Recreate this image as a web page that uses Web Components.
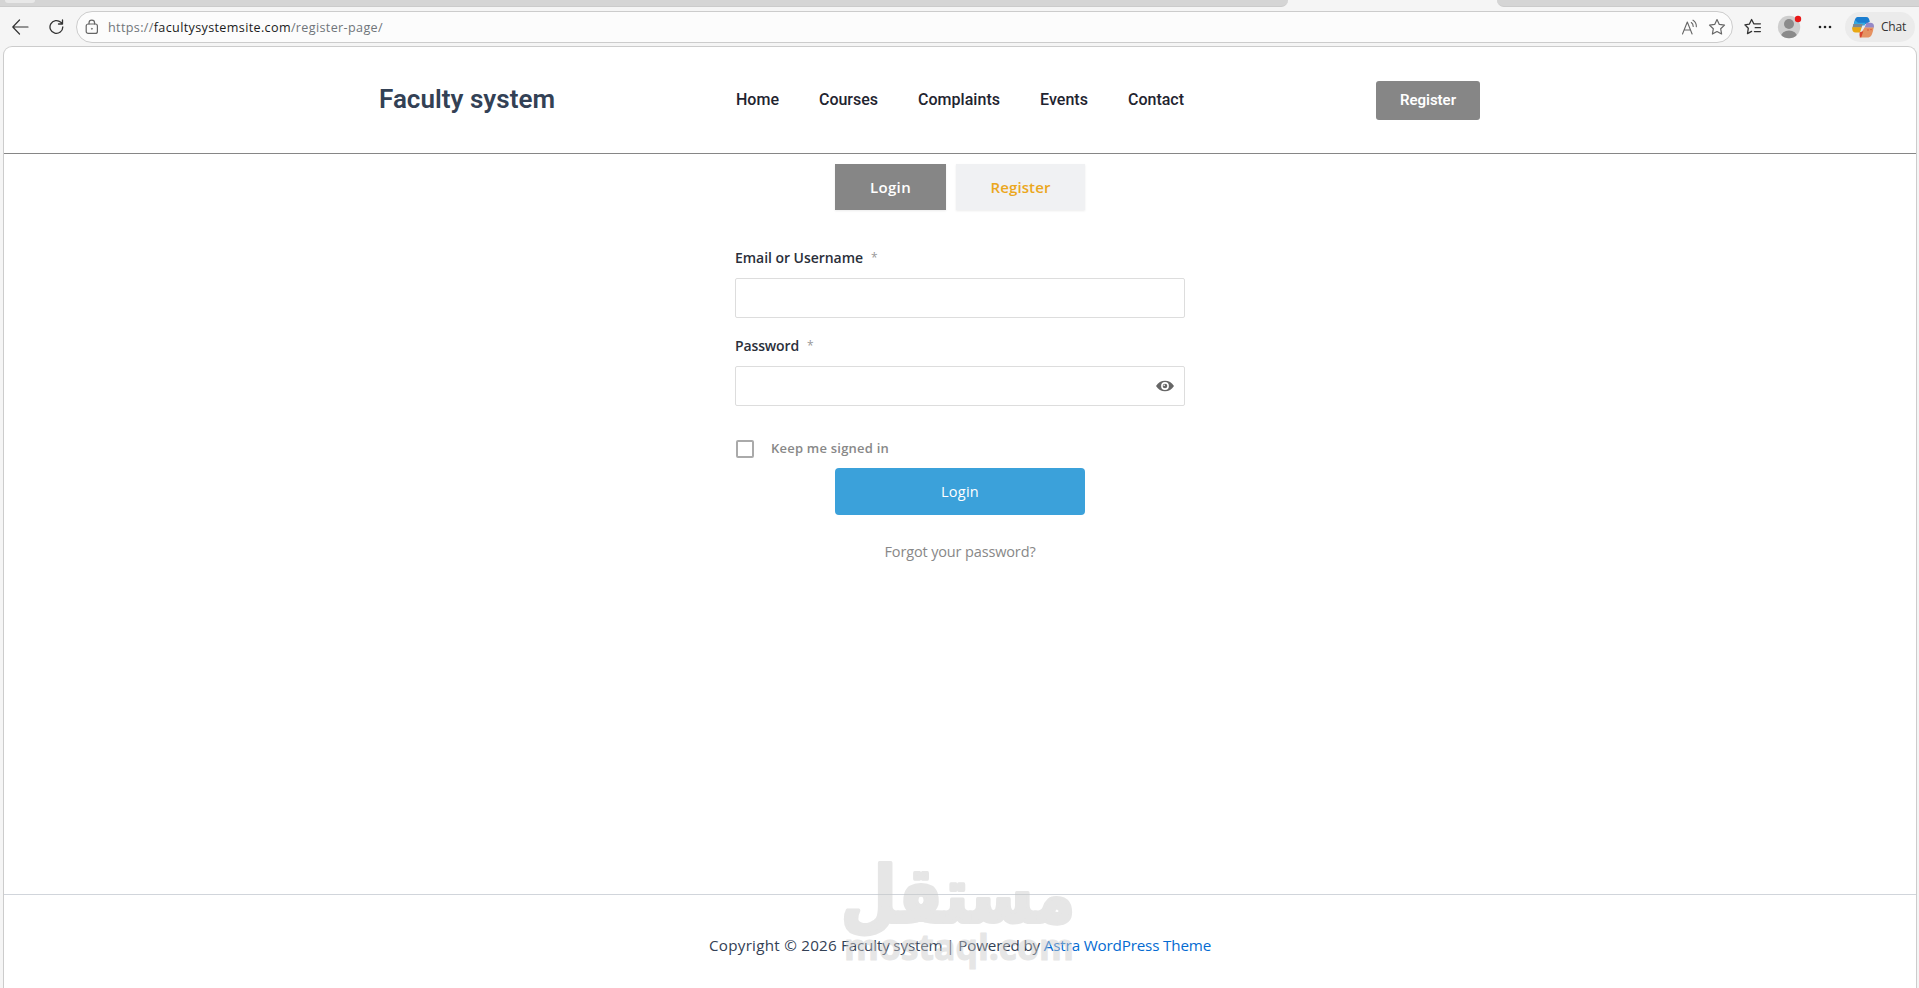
<!DOCTYPE html>
<html lang="en">
<head>
<meta charset="utf-8">
<title>Faculty system</title>
<style>
  html, body {
    margin: 0;
    height: 100%;
    overflow: hidden;
  }
  body {
    background: #f5f5f5;
    font-family: "Open Sans", "Noto Sans", sans-serif;
    color: #334155;
  }
</style>
</head>
<body>
<browser-window>
  <browser-toolbar slot="toolbar"></browser-toolbar>
  <site-header>
    <nav-link width="43">Home</nav-link>
    <nav-link width="59">Courses</nav-link>
    <nav-link width="82">Complaints</nav-link>
    <nav-link width="48">Events</nav-link>
    <nav-link width="56">Contact</nav-link>
  </site-header>
  <login-form></login-form>
  <site-footer></site-footer>
</browser-window>

<script>
function define (name, html, setup) {
  const template = document.createElement('template')
  template.innerHTML = html
  customElements.define(name, class extends HTMLElement {
    constructor () {
      super()
      this.attachShadow({ mode: 'open' })
        .appendChild(template.content.cloneNode(true))
    }

    connectedCallback () {
      if (setup) setup(this, this.shadowRoot)
    }
  })
}

function fitText (width, text) {
  const label = document.createElement('fit-text')
  label.setAttribute('width', width)
  label.textContent = text
  return label
}

// one line of text, tracked so that it is exactly `width` pixels long
define('fit-text', `
<style>
  :host { display: block; white-space: nowrap; flex: none; }
  span { display: inline-block; }
</style>
<span><slot></slot></span>
`, (host, root) => {
  const width = Number(host.getAttribute('width'))
  const span = root.querySelector('span')
  host.style.width = width + 'px'
  const natural = span.getBoundingClientRect().width
  const count = host.textContent.trim().length
  span.style.letterSpacing = ((width - natural) / count) + 'px'
})

define('browser-window', `
<style>
  :host { display: flex; flex-direction: column; height: 100vh; }
  .tabs {
    display: flex;
    justify-content: space-between;
    height: 7px;
    flex: none;
  }
  .tabs div {
    background: #d5d5d5;
    border-bottom: 1px solid #cbcbcb;
    box-sizing: border-box;
  }
  .before { width: 1288px; border-bottom-right-radius: 7px; }
  .before i {
    display: block;
    margin-left: 5px;
    width: 30px;
    height: 3px;
    background: #e8e8e8;
    border-radius: 0 0 5px 5px;
  }
  .after { width: 422px; border-bottom-left-radius: 7px; }
  .page {
    flex: 1;
    display: flex;
    flex-direction: column;
    margin: 0 2px 0 3px;
    border: 1px solid #cccccc;
    border-bottom: 0;
    border-radius: 9px 9px 0 0;
    background: #fff;
    overflow: hidden;
  }
</style>
<div class="tabs"><div class="before"><i></i></div><div class="after"></div></div>
<slot name="toolbar"></slot>
<div class="page"><slot></slot></div>
`)

define('browser-toolbar', `
<style>
  :host {
    display: flex;
    align-items: center;
    height: 39px;
    flex: none;
    box-sizing: border-box;
    padding: 1px 4px 0 12px;
  }
  svg { display: block; flex: none; fill: none; stroke: #333; stroke-linecap: round; stroke-linejoin: round; }
  .reload { margin-left: 20px; }
  .address {
    display: flex;
    align-items: center;
    box-sizing: border-box;
    width: 1657px;
    height: 32px;
    margin-left: 12px;
    padding: 0 6px 0 8px;
    border: 1px solid #cccccc;
    border-radius: 16px;
    background: #fcfcfc;
    font-size: 12.6px;
    line-height: 20px;
    color: #70757a;
  }
  .address svg { stroke: #666; }
  .url { margin: 0 auto 0 9px; padding-top: 1px; }
  b { font-weight: 400; color: #1b1b1b; }
  .chat {
    display: flex;
    align-items: center;
    box-sizing: border-box;
    width: 70px;
    height: 30px;
    margin-left: 13px;
    padding-left: 7px;
    gap: 7px;
    border-radius: 15px;
    background: #ebebeb;
    font-size: 12px;
    line-height: 18px;
    color: #333;
  }
</style>
<svg width="17" height="16" viewBox="0 0 17 16" stroke-width="1.2"><path d="M7.500 1 .8 8l6.700 7M1 8h15"/></svg>
<svg class="reload" width="15" height="16" viewBox="0 0 15 16" stroke-width="1.3"><path d="M13.800 8a6.400 6.400 0 1 1-2-4.700l1.500 1.400M13.500 1v4h-4"/></svg>
<div class="address">
  <svg width="14" height="16" viewBox="0 0 14 16" stroke-width="1.2"><rect x="1.2" y="5" width="11.2" height="9.4" rx="2"/><path d="M4 5V4a2.800 2.800 0 0 1 5.600 0v1"/><circle cx="6.8" cy="9.8" r=".5" fill="#666" stroke-width=".6"/></svg>
  <fit-text class="url" width="275">https://<b>facultysystemsite.com</b>/register-page/</fit-text>
  <svg width="17" height="17" viewBox="0 0 17 17" stroke-width="1.1"><path d="m.5 15 4.800-12 4.800 12M2.100 11h6.400M9.300 3.500c1.400.9 1.900 2.400 1.900 4M11 1.200c2.500 1.600 3.500 4 3.300 6.500"/></svg>
  <svg style="margin-left:9px" width="18" height="18" viewBox="0 0 18 18" stroke-width="1.2"><path d="m9 1.600 2.300 4.800 5.200.7-3.800 3.700.9 5.200L9 13.500 4.400 16l.9-5.200L1.500 7.100l5.200-.7z"/></svg>
</div>
<svg style="margin-left:11px" width="18" height="18" viewBox="0 0 18 18" stroke-width="1.3"><path d="M9.800 5.800 7.600 1.500 5.300 6.200l-4.400.6 3.400 3.500-.8 5.300 4.100-2.200M9.800 5.800h6.600M11.200 9.700h5.200M10.400 13.600h6"/></svg>
<svg style="margin-left:15px" width="25" height="26" viewBox="0 0 25 26">
  <clipPath id="disc"><circle cx="12" cy="13" r="11.2"/></clipPath>
  <circle cx="12" cy="13" r="11.2" fill="#cecece" stroke="none"/>
  <g clip-path="url(#disc)" fill="#8a8a8a" stroke="none"><circle cx="12" cy="10" r="5"/><ellipse cx="12" cy="22.5" rx="8" ry="6"/></g>
  <circle cx="21" cy="5" r="3.2" fill="#e81818" stroke="none"/>
</svg>
<svg style="margin-left:16px" width="14" height="4" viewBox="0 0 14 4"><g fill="#222" stroke="none"><circle cx="2" cy="2" r="1.3"/><circle cx="7" cy="2" r="1.3"/><circle cx="12" cy="2" r="1.3"/></g></svg>
<div class="chat">
  <svg width="22" height="21" viewBox="0 0 22 21"><g stroke="none">
    <path fill="#1b7ed0" d="M5.500 0h8.700c2.400 0 3 2 3.600 4.800L14 7 1.600 8C2.500 4 3.200 0 5.500 0z"/>
    <path fill="#35a9e0" d="M3.200 3.200 6 5.800h7.600l-1 2.600H1.400z"/>
    <path fill="#7c8890" d="M1.400 7h9.400L9.500 10.800H.4z"/>
    <path fill="#e9a711" d="M.3 10.200h9.400L8 15.500H3.600C1 15.500-.2 13.400.3 10.200z"/>
    <path fill="#9488c7" d="M14.400 5.700h4.100c2.800 0 3.900 2 3.300 5H12.600z"/>
    <path fill="#e59261" d="M12.600 10.600h9.100c-1 5-2 9.800-5.200 9.800H7.400l2-5z"/>
    <path fill="#d9442f" d="m7.800 15.200 3.500-1-2.100 6.300c-1.300-.1-2.100-1.600-1.400-5.300z"/>
    <circle cx="16" cy="13" r=".7" fill="#d9442f"/><circle cx="19" cy="12.6" r=".7" fill="#d9442f"/>
  </g></svg>
  <fit-text width="25">Chat</fit-text>
</div>
`)

define('site-header', `
<style>
  :host {
    display: flex;
    align-items: center;
    flex: none;
    box-sizing: border-box;
    height: 107px;
    padding-left: 375px;
    border-bottom: 1px solid #868686;
    font-family: Roboto, sans-serif;
  }
  .title {
    padding-bottom: 2px;
    font-size: 26px;
    font-weight: 600;
    line-height: 36px;
  }
  nav {
    display: flex;
    gap: 40px;
    margin-left: 181px;
    padding-bottom: 1px;
    font-size: 16px;
    font-weight: 500;
    line-height: 20px;
    color: #1f2430;
  }
  .register {
    display: flex;
    align-items: center;
    justify-content: center;
    box-sizing: border-box;
    width: 104px;
    height: 39px;
    margin: 1px 0 0 192px;
    padding-bottom: 1px;
    border-radius: 3px;
    background: #868686;
    color: #fff;
    font-size: 15px;
    font-weight: 600;
    line-height: 20px;
  }
</style>
<fit-text class="title" width="176">Faculty system</fit-text>
<nav><slot></slot></nav>
<div class="register"><fit-text width="56">Register</fit-text></div>
`)

// defined after site-header, whose font its width is measured in
define('nav-link', `
<style>
  :host { display: block; }
</style>
`, (host, root) => {
  root.append(fitText(host.getAttribute('width'), host.textContent))
})

define('form-field', `
<style>
  :host { display: block; }
  .label {
    display: flex;
    height: 31px;
    gap: 8px;
    font-size: 14px;
    font-weight: 600;
    line-height: 22px;
    color: #2a2f3a;
  }
  i { font-style: normal; font-size: 12px; color: #999; font-weight: 400; }
  .box {
    display: flex;
    align-items: center;
    justify-content: flex-end;
    box-sizing: border-box;
    height: 40px;
    padding-right: 10px;
    border: 1px solid #dddddd;
    border-radius: 2px;
  }
</style>
<div class="label"><i>*</i></div>
<div class="box"><slot></slot></div>
`, (host, root) => {
  root.querySelector('.label').prepend(fitText(host.getAttribute('width'), host.getAttribute('label')))
})

define('login-form', `
<style>
  :host {
    display: flex;
    flex-direction: column;
    align-items: center;
    flex: none;
    height: 740px;
    box-sizing: border-box;
    padding-top: 10px;
  }
  .tabs { display: flex; gap: 10px; height: 46px; font-size: 15px; font-weight: 600; }
  .tabs div {
    display: flex;
    align-items: center;
    justify-content: center;
    box-shadow: 0 1px 2px rgba(0, 0, 0, .08);
  }
  .login { width: 111px; background: #868686; color: #fff; }
  .register { width: 129px; background: #f0f1f3; color: #eba71d; }
  form { width: 450px; margin-top: 37px; }
  form-field + form-field { margin-top: 17px; }
  .keep {
    display: flex;
    align-items: center;
    gap: 17px;
    height: 18px;
    margin: 34px 0 10px 1px;
    font-size: 13px;
    font-weight: 600;
    line-height: 18px;
    color: #888;
  }
  .keep fit-text { padding-bottom: 2px; }
  .check { box-sizing: border-box; width: 18px; height: 18px; border: 2px solid #aaa; border-radius: 2px; }
  .submit {
    display: flex;
    align-items: center;
    justify-content: center;
    width: 250px;
    height: 47px;
    margin: 0 auto;
    border-radius: 4px;
    background: #3ba1da;
    color: #fff;
    font-size: 14.5px;
  }
  .forgot { margin: 26px auto 0; font-size: 14.5px; line-height: 22px; color: #888; }
</style>
<div class="tabs">
  <div class="login"><fit-text width="41">Login</fit-text></div>
  <div class="register"><fit-text width="60">Register</fit-text></div>
</div>
<form>
  <form-field label="Email or Username" width="128"></form-field>
  <form-field label="Password" width="64">
    <svg width="18" height="12" viewBox="0 0 18 12"><path fill="#666" fill-rule="evenodd" d="M0 6c2.200-3.600 5.200-5.300 9-5.300S15.800 2.400 18 6c-2.200 3.600-5.200 5.300-9 5.300S2.200 9.600 0 6zm9-3.900a3.900 3.900 0 1 0 0 7.800 3.900 3.900 0 0 0 0-7.800z"/><circle cx="9" cy="6" r="2.3" fill="#666"/><circle cx="8.2" cy="5.2" r=".8" fill="#fff"/></svg>
  </form-field>
  <div class="keep"><div class="check"></div><fit-text width="118">Keep me signed in</fit-text></div>
  <div class="submit"><fit-text width="38">Login</fit-text></div>
  <fit-text class="forgot" width="151">Forgot your password?</fit-text>
</form>
`)

define('site-footer', `
<style>
  :host {
    display: flex;
    justify-content: center;
    flex: 1;
    gap: 4px;
    position: relative;
    border-top: 1px solid #d1d5db;
  }
  fit-text { margin-top: 37px; font-size: 15.2px; line-height: 26px; }
  a { color: #046bd2; }
  /* the watermark lies over the footer text */
  svg { position: absolute; left: 832px; top: -83px; opacity: .45; overflow: visible; }
  text { fill: #c8c8c8; stroke: #c8c8c8; stroke-linejoin: round; }
</style>
<fit-text width="128">Copyright © 2026</fit-text>
<fit-text width="370">Faculty system | Powered by <a>Astra WordPress Theme</a></fit-text>
<svg width="250" height="175" viewBox="0 0 250 175">
  <text x="122" y="110" direction="rtl" text-anchor="middle" textLength="234" lengthAdjust="spacingAndGlyphs" font-family="DejaVu Sans" font-weight="700" font-size="77" stroke-width="4">مستقل</text>
  <text x="8" y="148" textLength="230" lengthAdjust="spacingAndGlyphs" font-family="Open Sans" font-weight="700" font-size="35" stroke-width="1">mostaql.com</text>
</svg>
`)
</script>
</body>
</html>
